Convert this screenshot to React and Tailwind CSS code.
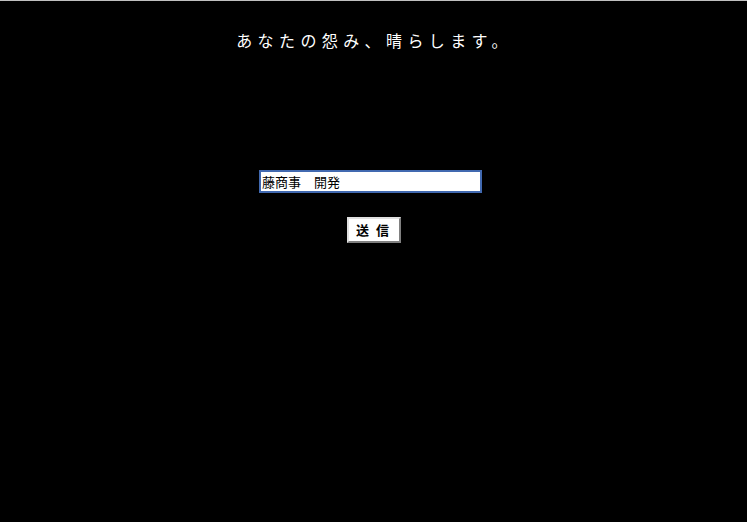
import { useState } from 'react';

const App = () => {
  const [name, setName] = useState('藤商事　開発');

  return (
    <div
      className="min-h-[522px] bg-black border-t border-[#c0c0c0] flex flex-col items-center"
      style={{ fontFamily: '"Noto Sans CJK JP", "Noto Sans", sans-serif' }}
    >
      <h1 className="mt-[27px] pl-[2px] text-[16px] leading-[24px] tracking-[5.4px] text-white font-normal">
        あなたの怨み、晴らします。
      </h1>

      <form onSubmit={(e) => e.preventDefault()} className="mt-[118px] flex flex-col items-center">
        <input
          type="text"
          value={name}
          onChange={(e) => setName(e.target.value)}
          className="w-[223px] h-[23px] mr-[6px] bg-white border-2 border-[#4169b0] px-[1px] text-[13px] text-black outline-none"
        />
        <button
          type="submit"
          className="mt-[24px] w-[54px] h-[26px] bg-white border-2 border-t-[#e0e0e0] border-l-[#e0e0e0] border-b-[#808080] border-r-[#808080] text-[13px] font-bold text-black tracking-[0.15em]"
        >
          送 信
        </button>
      </form>
    </div>
  );
};

export default App;
